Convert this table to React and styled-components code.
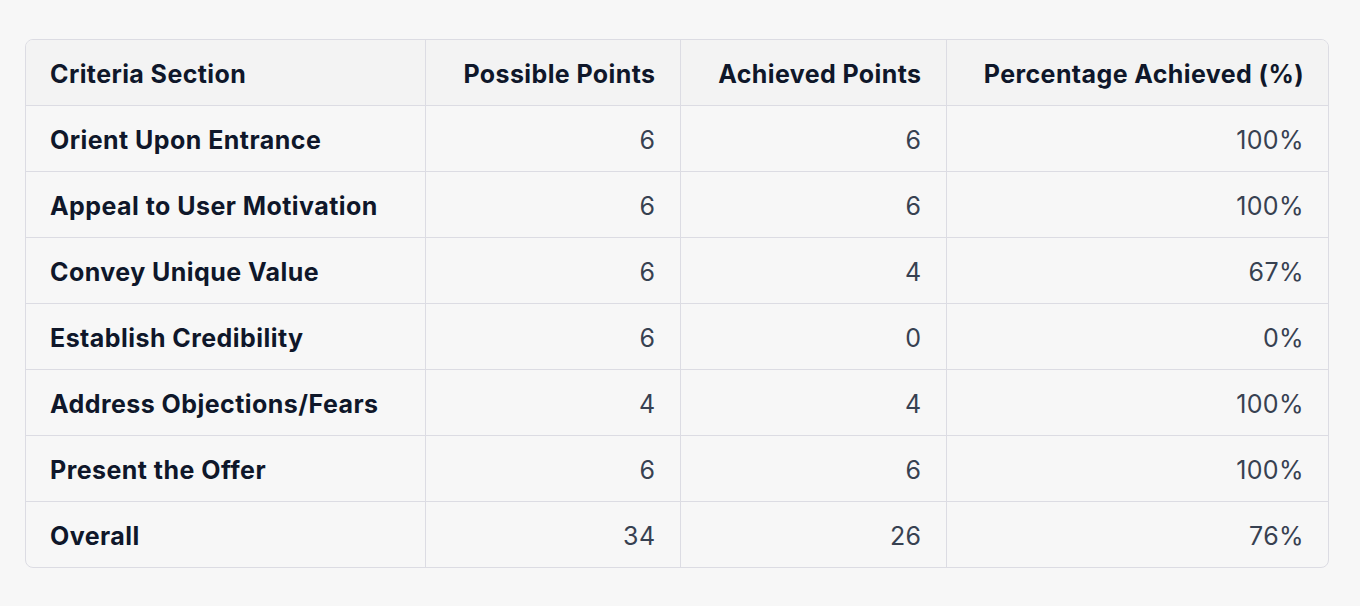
import React from "react";
import styled, { createGlobalStyle } from "styled-components";

const GlobalStyle = createGlobalStyle`
  html, body {
    margin: 0;
    padding: 0;
    background: #f7f7f7;
    font-family: Inter, "Noto Sans", sans-serif;
  }
`;

const Page = styled.div`
  padding: 39px 31px 0 25px;
`;

const TableWrap = styled.div`
  border: 1px solid #dcdce3;
  border-radius: 8px;
  overflow: hidden;
  width: 1302px;
`;

const Table = styled.table`
  width: 100%;
  border-collapse: collapse;
  table-layout: fixed;
`;

const HeadRow = styled.tr`
  background: #f3f3f3;
`;

const Th = styled.th`
  height: 63px;
  padding: 2px 24px 0;
  line-height: 30px;
  font-size: 25px;
  font-weight: 700;
  color: #0f172a;
  letter-spacing: 0.4px;
  white-space: nowrap;
  text-align: ${(p) => (p.$num ? "right" : "left")};
  border-left: ${(p) => (p.$first ? "none" : "1px solid #dcdce3")};
  border-bottom: 1px solid #dcdce3;
`;

const Td = styled.td`
  height: 63px;
  padding: 2px 24px 0;
  line-height: 30px;
  font-size: 25px;
  font-weight: ${(p) => (p.$label ? 700 : 400)};
  color: ${(p) => (p.$label ? "#0f172a" : "#374151")};
  letter-spacing: ${(p) => (p.$label ? "0.45px" : "0.4px")};
  white-space: nowrap;
  text-align: ${(p) => (p.$label ? "left" : "right")};
  border-left: ${(p) => (p.$label ? "none" : "1px solid #dcdce3")};
  border-top: 1px solid #dcdce3;
`;

const rows = [
  ["Orient Upon Entrance", 6, 6, "100%"],
  ["Appeal to User Motivation", 6, 6, "100%"],
  ["Convey Unique Value", 6, 4, "67%"],
  ["Establish Credibility", 6, 0, "0%"],
  ["Address Objections/Fears", 4, 4, "100%"],
  ["Present the Offer", 6, 6, "100%"],
  ["Overall", 34, 26, "76%"],
];

const App = () => {
  return (
    <Page>
      <GlobalStyle />
      <TableWrap>
        <Table>
          <colgroup>
            <col style={{ width: 399 }} />
            <col style={{ width: 255 }} />
            <col style={{ width: 266 }} />
            <col />
          </colgroup>
          <thead>
            <HeadRow>
              <Th $first>Criteria Section</Th>
              <Th $num>Possible Points</Th>
              <Th $num>Achieved Points</Th>
              <Th $num>Percentage Achieved (%)</Th>
            </HeadRow>
          </thead>
          <tbody>
            {rows.map((r) => (
              <tr key={r[0]}>
                <Td $label>{r[0]}</Td>
                <Td>{r[1]}</Td>
                <Td>{r[2]}</Td>
                <Td>{r[3]}</Td>
              </tr>
            ))}
          </tbody>
        </Table>
      </TableWrap>
    </Page>
  );
};

export default App;
